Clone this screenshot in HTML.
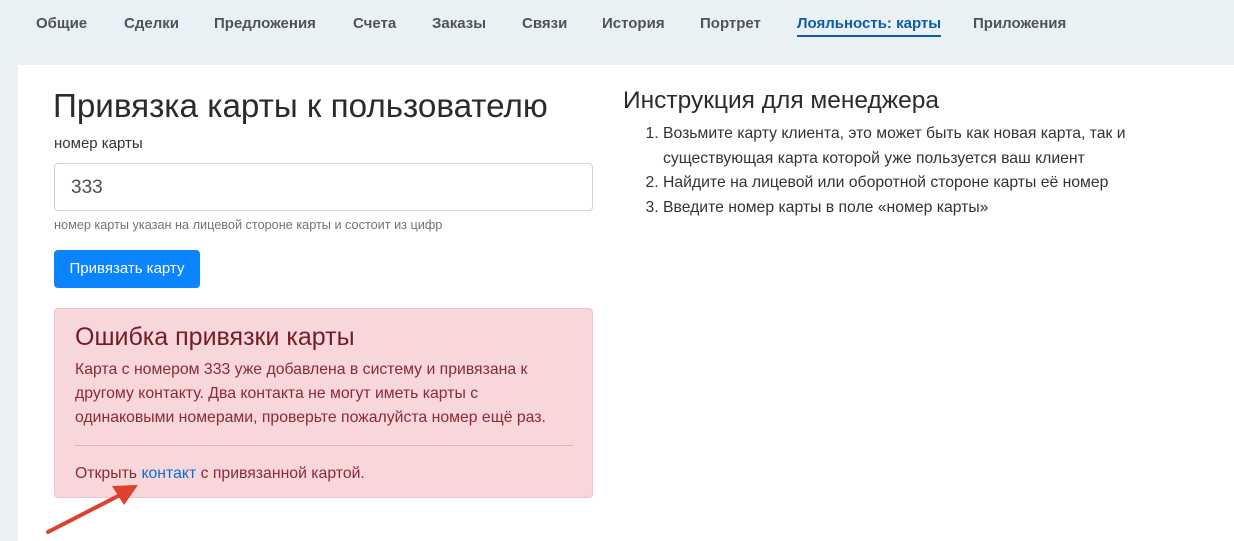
<!DOCTYPE html>
<html><head><meta charset="utf-8"><style>
*{box-sizing:border-box;margin:0;padding:0}
body{width:1234px;height:541px;overflow:hidden;background:#eaf1f4;font-family:"Liberation Sans","DejaVu Sans",sans-serif;color:#212529;position:relative}
.nav{position:absolute;top:0;left:0;height:65px;width:1234px}
.nav span{position:absolute;top:15px;font-size:15px;font-weight:bold;color:#4a5360}
.nav .act{color:#0b5cad;border-bottom:2px solid #0b5cad;padding-bottom:3px}
.panel{position:absolute;left:18px;top:65px;width:1216px;height:476px;background:#fff}
.abs{position:absolute}
</style></head><body>
<div class="nav">
<span style="left:36px">Общие</span>
<span style="left:124px">Сделки</span>
<span style="left:214px">Предложения</span>
<span style="left:353px">Счета</span>
<span style="left:432px">Заказы</span>
<span style="left:522px">Связи</span>
<span style="left:602px">История</span>
<span style="left:700px">Портрет</span>
<span style="left:797px" class="act">Лояльность: карты</span>
<span style="left:973px">Приложения</span>
</div>
<div class="panel"></div>
<div class="abs" style="left:53px;top:88px;font-size:33.2px;color:#2b2b2b">Привязка карты к пользователю</div>
<div class="abs" style="left:54px;top:135px;font-size:15px;color:#333">номер карты</div>
<div class="abs" style="left:54px;top:163px;width:539px;height:48px;border:1px solid #ced4da;border-radius:4px;font-size:19px;color:#495057;padding:13px 16px">333</div>
<div class="abs" style="left:54px;top:218px;font-size:12.7px;color:#6c757d">номер карты указан на лицевой стороне карты и состоит из цифр</div>
<div class="abs" style="left:54px;top:250px;width:146px;height:38px;background:#0a84ff;border-radius:4px;color:#fff;font-size:15px;line-height:38px;text-align:center">Привязать карту</div>
<div class="abs" style="left:54px;top:308px;width:539px;height:190px;background:#f8d7da;border:1px solid #f5c2c7;border-radius:4px;color:#7c1f2a">
<div style="position:absolute;left:20px;top:14px;font-size:25px;color:#721c24">Ошибка привязки карты</div>
<div style="position:absolute;left:20px;top:49px;width:500px;font-size:15.8px;line-height:24px;color:#8a2a33">Карта с номером 333 уже добавлена в систему и привязана к другому контакту. Два контакта не могут иметь карты с одинаковыми номерами, проверьте пожалуйста номер ещё раз.</div>
<div style="position:absolute;left:20px;top:136px;width:498px;border-top:1px solid #eab0b6"></div>
<div style="position:absolute;left:20px;top:156px;font-size:15.8px;color:#8a2a33">Открыть <span style="color:#0a6ed1">контакт</span> с привязанной картой.</div>
</div>
<div class="abs" style="left:623px;top:87px;font-size:24.5px;color:#2b2b2b">Инструкция для менеджера</div>
<ol class="abs" style="left:663px;top:122px;width:500px;font-size:15.75px;line-height:24.5px;color:#333">
<li>Возьмите карту клиента, это может быть как новая карта, так и существующая карта которой уже пользуется ваш клиент</li>
<li>Найдите на лицевой или оборотной стороне карты её номер</li>
<li>Введите номер карты в поле «номер карты»</li>
</ol>
<svg class="abs" style="left:0;top:0" width="1234" height="541"><line x1="48" y1="532" x2="122" y2="494" stroke="#e0402f" stroke-width="4" stroke-linecap="round"/><polygon points="138,485 112,486 124,505" fill="#e0402f"/></svg>
</body></html>
